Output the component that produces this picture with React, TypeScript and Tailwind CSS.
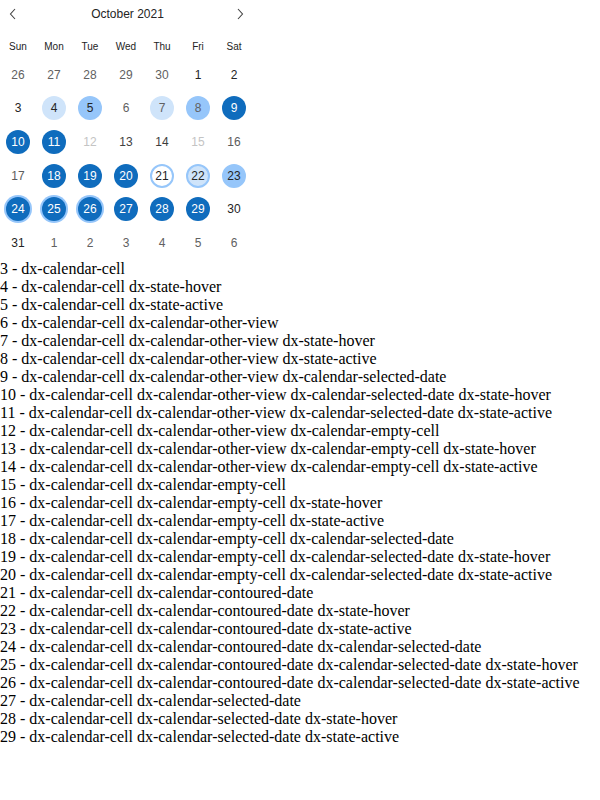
import React from "react";

type Cell = { n: number; cls: string };

const base = "text-[#242424]";
const other = "text-[#616161]";
const hover = "bg-[#cfe4fa]";
const active = "bg-[#96c6fa]";
const selected = "bg-[#0f6cbd] text-white";
const contour = "border-2 border-[#96c6fa]";

const weeks: Cell[][] = [
  [
    { n: 26, cls: other },
    { n: 27, cls: other },
    { n: 28, cls: other },
    { n: 29, cls: other },
    { n: 30, cls: other },
    { n: 1, cls: base },
    { n: 2, cls: base },
  ],
  [
    { n: 3, cls: base },
    { n: 4, cls: `${base} ${hover}` },
    { n: 5, cls: `${base} ${active}` },
    { n: 6, cls: other },
    { n: 7, cls: `${other} ${hover}` },
    { n: 8, cls: `${other} ${active}` },
    { n: 9, cls: selected },
  ],
  [
    { n: 10, cls: selected },
    { n: 11, cls: selected },
    { n: 12, cls: "text-[#c4c4c4]" },
    { n: 13, cls: "text-[#424242]" },
    { n: 14, cls: "text-[#3d3d3d]" },
    { n: 15, cls: "text-[#c4c4c4]" },
    { n: 16, cls: "text-[#5c5c5c]" },
  ],
  [
    { n: 17, cls: "text-[#5c5c5c]" },
    { n: 18, cls: selected },
    { n: 19, cls: selected },
    { n: 20, cls: selected },
    { n: 21, cls: `${base} ${contour} bg-white` },
    { n: 22, cls: `${base} ${contour} ${hover}` },
    { n: 23, cls: `${base} ${contour} ${active}` },
  ],
  [
    { n: 24, cls: `${selected} ring-2 ring-[#96c6fa]` },
    { n: 25, cls: `${selected} ring-2 ring-[#96c6fa]` },
    { n: 26, cls: `${selected} ring-2 ring-[#96c6fa]` },
    { n: 27, cls: selected },
    { n: 28, cls: selected },
    { n: 29, cls: selected },
    { n: 30, cls: base },
  ],
  [
    { n: 31, cls: base },
    { n: 1, cls: other },
    { n: 2, cls: other },
    { n: 3, cls: other },
    { n: 4, cls: other },
    { n: 5, cls: other },
    { n: 6, cls: other },
  ],
];

const legend = [
  "3 - dx-calendar-cell",
  "4 - dx-calendar-cell dx-state-hover",
  "5 - dx-calendar-cell dx-state-active",
  "6 - dx-calendar-cell dx-calendar-other-view",
  "7 - dx-calendar-cell dx-calendar-other-view dx-state-hover",
  "8 - dx-calendar-cell dx-calendar-other-view dx-state-active",
  "9 - dx-calendar-cell dx-calendar-other-view dx-calendar-selected-date",
  "10 - dx-calendar-cell dx-calendar-other-view dx-calendar-selected-date dx-state-hover",
  "11 - dx-calendar-cell dx-calendar-other-view dx-calendar-selected-date dx-state-active",
  "12 - dx-calendar-cell dx-calendar-other-view dx-calendar-empty-cell",
  "13 - dx-calendar-cell dx-calendar-other-view dx-calendar-empty-cell dx-state-hover",
  "14 - dx-calendar-cell dx-calendar-other-view dx-calendar-empty-cell dx-state-active",
  "15 - dx-calendar-cell dx-calendar-empty-cell",
  "16 - dx-calendar-cell dx-calendar-empty-cell dx-state-hover",
  "17 - dx-calendar-cell dx-calendar-empty-cell dx-state-active",
  "18 - dx-calendar-cell dx-calendar-empty-cell dx-calendar-selected-date",
  "19 - dx-calendar-cell dx-calendar-empty-cell dx-calendar-selected-date dx-state-hover",
  "20 - dx-calendar-cell dx-calendar-empty-cell dx-calendar-selected-date dx-state-active",
  "21 - dx-calendar-cell dx-calendar-contoured-date",
  "22 - dx-calendar-cell dx-calendar-contoured-date dx-state-hover",
  "23 - dx-calendar-cell dx-calendar-contoured-date dx-state-active",
  "24 - dx-calendar-cell dx-calendar-contoured-date dx-calendar-selected-date",
  "25 - dx-calendar-cell dx-calendar-contoured-date dx-calendar-selected-date dx-state-hover",
  "26 - dx-calendar-cell dx-calendar-contoured-date dx-calendar-selected-date dx-state-active",
  "27 - dx-calendar-cell dx-calendar-selected-date",
  "28 - dx-calendar-cell dx-calendar-selected-date dx-state-hover",
  "29 - dx-calendar-cell dx-calendar-selected-date dx-state-active",
];

const Chevron = ({ dir }: { dir: "left" | "right" }) => (
  <svg width="8" height="12" viewBox="0 0 8 12" fill="none">
    <path
      d={dir === "left" ? "M6 1 L1.5 6 L6 11" : "M2 1 L6.5 6 L2 11"}
      stroke="#424242"
      strokeWidth="1.1"
    />
  </svg>
);

export default function App() {
  return (
    <div className="bg-white">
      <div className="w-[252px] pt-[1px] font-['Liberation_Sans',Arial,sans-serif]">
        <div className="h-[26px] flex items-center justify-between pl-[9px] pr-[8px]">
          <Chevron dir="left" />
          <span className="text-[12px] text-[#242424] pl-[2px]">October 2021</span>
          <Chevron dir="right" />
        </div>
        <div className="mt-[7px] grid grid-cols-7 h-[24px] items-center text-[10px] text-[#242424]">
          {["Sun", "Mon", "Tue", "Wed", "Thu", "Fri", "Sat"].map((d) => (
            <div key={d} className="text-center">
              {d}
            </div>
          ))}
        </div>
        {weeks.map((w, i) => (
          <div key={i} className="grid grid-cols-7 h-[33.6px] items-center">
            {w.map((c, j) => (
              <div key={j} className="flex justify-center">
                <span
                  className={`w-[24px] h-[24px] rounded-full flex items-center justify-center text-[12px] ${c.cls}`}
                >
                  {c.n}
                </span>
              </div>
            ))}
          </div>
        ))}
      </div>
      <div className="font-['Liberation_Serif','Times_New_Roman',serif] text-[16px] leading-[18px] text-black whitespace-nowrap">
        {legend.map((l) => (
          <div key={l}>{l}</div>
        ))}
      </div>
    </div>
  );
}
